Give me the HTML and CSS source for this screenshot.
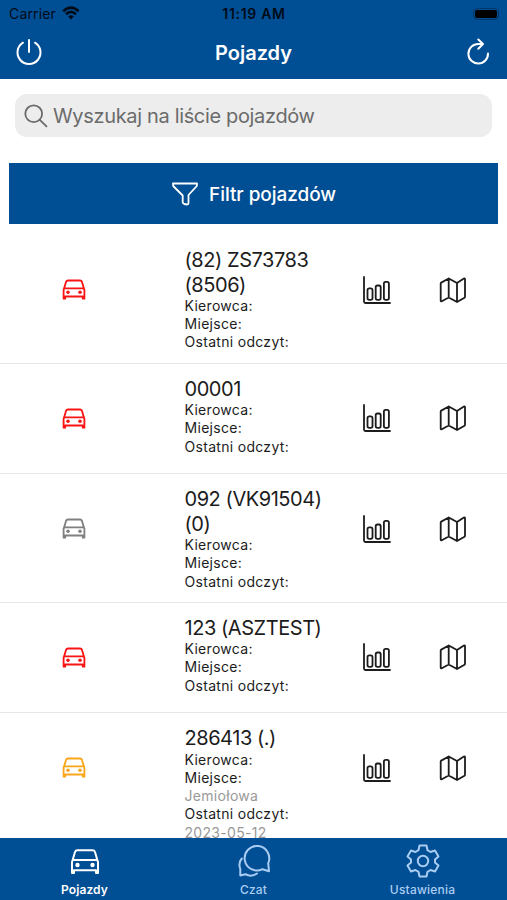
FILE: index.html
```html
<!DOCTYPE html>
<html lang="pl">
<head>
    <meta charset="UTF-8" />
    <meta name="viewport" content="width=device-width, initial-scale=1" />
    <title>Pojazdy</title>
    <link rel="stylesheet" href="styles.css">
</head>
<body>
    <svg class="sprite" aria-hidden="true">
        <symbol id="car" viewBox="0 0 30 26">
            <path d="M2 24.500 V13.500 L2.800 11 L5 3.500 Q5.600 1.800 7.500 1.800 H22.500 Q24.400 1.800 25 3.500 L27.200 11 L28 13.500 V24.500 H26 V21.800 H4 V24.500 Z M2.800 11.500 H27.200" />
            <circle class="fill" cx="7.500" cy="16.500" r="2.200" />
            <circle class="fill" cx="22.500" cy="16.500" r="2.200" />
        </symbol>
        <symbol id="chart" viewBox="0 0 28 28">
            <path d="M1 1 V25.500 Q1 27 2.500 27 H27" />
            <rect x="4.500" y="12.300" width="5" height="11.500" rx="1.800" />
            <rect x="12.700" y="9.500" width="5" height="14.300" rx="1.800" />
            <rect x="20.900" y="5.800" width="5" height="18" rx="1.800" />
        </symbol>
        <symbol id="map" viewBox="0 0 28 28">
            <path d="M9.700 2.500 L2.200 6.600 Q1.700 6.900 1.700 7.500 V24.500 Q1.700 25.700 2.800 25.200 L9.700 21.500 L18 26 L25.500 21.700 Q26 21.400 26 20.800 V3.300 Q26 2.100 24.900 2.600 L18 7 Z M9.700 2.500 V21.500 M18 7 V26" />
        </symbol>
    </svg>

    <header class="header">
        <div class="status-bar">
            <div class="carrier">
                <span>Carrier</span>
                <svg class="wifi" viewBox="0 0 18 14">
                    <path d="M1.300 5.200 Q9 -2 16.700 5.200 M4 8.200 Q9 3.500 14 8.200" />
                    <path class="fill" d="M9 13.500 L6.200 10.500 Q9 8 11.800 10.500 Z" />
                </svg>
            </div>
            <div class="clock">11:19 AM</div>
            <div class="battery"><span class="battery-level"></span></div>
        </div>
        <div class="nav-bar">
            <svg class="nav-icon" viewBox="0 0 28 28">
                <path d="M14 2 V14 M8 4.700 A11.500 11.500 0 1 0 20 4.700" />
            </svg>
            <h1 class="title">Pojazdy</h1>
            <svg class="nav-icon" viewBox="0 0 28 28">
                <path d="M24 15.500 A9.800 9.800 0 1 1 14.200 6 H18.700 M14.300 1.500 L19 6 L14.300 10.700" />
            </svg>
        </div>
    </header>

    <main class="content">
        <label class="search">
            <svg class="search-icon" viewBox="0 0 24 24">
                <circle cx="9.700" cy="9.700" r="8.400" />
                <path d="M15.800 15.800 L22.500 22.300" />
            </svg>
            <span>Wyszukaj na liście pojazdów</span>
        </label>

        <div class="filter-btn">
            <svg class="filter-icon" viewBox="0 0 28 24">
                <path d="M2 1.500 H26 L25.800 4 L17.500 13 V21 Q17.500 22.500 16 22.500 L13.200 22 Q11.700 21.500 11.700 20 V13.500 L2.200 4 Z" />
            </svg>
            <span>Filtr pojazdów</span>
        </div>

        <ul class="vehicles">
            <li class="vehicle">
                <div class="cell"><svg class="car red"><use href="#car" /></svg></div>
                <div class="info">
                    <h2>(82) ZS73783<br>(8506)</h2>
                    <p>Kierowca:</p>
                    <p>Miejsce:</p>
                    <p>Ostatni odczyt:</p>
                </div>
                <div class="cell"><svg class="action"><use href="#chart" /></svg></div>
                <div class="cell"><svg class="action"><use href="#map" /></svg></div>
            </li>
            <li class="vehicle">
                <div class="cell"><svg class="car red"><use href="#car" /></svg></div>
                <div class="info">
                    <h2>00001</h2>
                    <p>Kierowca:</p>
                    <p>Miejsce:</p>
                    <p>Ostatni odczyt:</p>
                </div>
                <div class="cell"><svg class="action"><use href="#chart" /></svg></div>
                <div class="cell"><svg class="action"><use href="#map" /></svg></div>
            </li>
            <li class="vehicle">
                <div class="cell"><svg class="car gray"><use href="#car" /></svg></div>
                <div class="info">
                    <h2>092 (VK91504)<br>(0)</h2>
                    <p>Kierowca:</p>
                    <p>Miejsce:</p>
                    <p>Ostatni odczyt:</p>
                </div>
                <div class="cell"><svg class="action"><use href="#chart" /></svg></div>
                <div class="cell"><svg class="action"><use href="#map" /></svg></div>
            </li>
            <li class="vehicle">
                <div class="cell"><svg class="car red"><use href="#car" /></svg></div>
                <div class="info">
                    <h2>123 (ASZTEST)</h2>
                    <p>Kierowca:</p>
                    <p>Miejsce:</p>
                    <p>Ostatni odczyt:</p>
                </div>
                <div class="cell"><svg class="action"><use href="#chart" /></svg></div>
                <div class="cell"><svg class="action"><use href="#map" /></svg></div>
            </li>
            <li class="vehicle">
                <div class="cell"><svg class="car orange"><use href="#car" /></svg></div>
                <div class="info">
                    <h2>286413 (.)</h2>
                    <p>Kierowca:</p>
                    <p>Miejsce:</p>
                    <p class="value">Jemiołowa</p>
                    <p>Ostatni odczyt:</p>
                    <p class="value">2023-05-12</p>
                </div>
                <div class="cell"><svg class="action"><use href="#chart" /></svg></div>
                <div class="cell"><svg class="action"><use href="#map" /></svg></div>
            </li>
        </ul>
    </main>

    <nav class="tab-bar">
        <div class="tab active">
            <svg class="tab-icon" viewBox="0 0 34 34"><use href="#car" x="2" y="4.500" width="30" height="26" /></svg>
            <span>Pojazdy</span>
        </div>
        <div class="tab">
            <svg class="tab-icon" viewBox="0 0 34 34">
                <path d="M32 27.300 L31.200 19.200 A12.300 12.300 0 1 0 25.500 25.200 Z" />
                <path d="M4.800 14.500 Q1 19 3.300 25 L3.300 31.500 L8.500 30.200 Q14 33.500 20 29.500" />
            </svg>
            <span>Czat</span>
        </div>
        <div class="tab">
            <svg class="tab-icon" viewBox="0 0 34 34">
                <path d="M13.500 1.500 H20.500 L21.500 6.200 L24.500 8 L29 6.500 L32.500 12.500 L29 15.500 V18.500 L32.500 21.500 L29 27.500 L24.500 26 L21.500 27.800 L20.500 32.500 H13.500 L12.500 27.800 L9.500 26 L5 27.500 L1.500 21.500 L5 18.500 V15.500 L1.500 12.500 L5 6.500 L9.500 8 L12.500 6.200 Z" />
                <circle cx="17" cy="17" r="5.200" />
            </svg>
            <span>Ustawienia</span>
        </div>
    </nav>
</body>
</html>
```

FILE: styles.css
```css
:root {
    --blue: #004e94;
    --tab-inactive: #a9cdf2;
    --text: #1c1c1c;
    --line: #e6e6e6;
}

* {
    margin: 0;
    padding: 0;
    box-sizing: border-box;
}

body {
    display: flex;
    flex-direction: column;
    height: 100vh;
    overflow: hidden;
    background: #fff;
    color: var(--text);
    font-family: Inter, "Liberation Sans", sans-serif;
}

svg {
    display: block;
    flex: none;
    fill: none;
    stroke: currentColor;
    stroke-width: 2;
    stroke-linecap: round;
    stroke-linejoin: round;
}

.fill {
    fill: currentColor;
    stroke: none;
}

.sprite {
    position: absolute;
    width: 0;
    height: 0;
}

.header {
    flex: none;
    height: 79px;
    background: var(--blue);
}

.status-bar {
    display: grid;
    grid-template-columns: 1fr auto 1fr;
    align-items: center;
    height: 27px;
    padding: 0 8px 0 9px;
    color: #000b18;
    font-size: 14px;
}

.carrier {
    display: flex;
    align-items: center;
    gap: 6px;
    letter-spacing: 0.15px;
}

.wifi {
    width: 18px;
    height: 14px;
    margin-top: -2px;
    stroke-width: 2.6;
    stroke-linecap: butt;
}

.clock {
    font-weight: 600;
    letter-spacing: 0.7px;
}

.battery {
    justify-self: end;
    width: 26px;
    height: 12px;
    padding: 1px;
    border: 1px solid #00386c;
    border-radius: 4px;
}

.battery-level {
    display: block;
    height: 100%;
    border-radius: 2px;
    background: #000;
}

.nav-bar {
    display: flex;
    align-items: center;
    justify-content: space-between;
    height: 50px;
    padding: 0 15px;
    color: #fff;
}

.nav-icon {
    width: 28px;
    height: 28px;
}

.title {
    padding-top: 1px;
    font-size: 20px;
    font-weight: 600;
}

.content {
    flex: 1;
    min-height: 0;
    overflow: hidden;
}

.search {
    display: flex;
    align-items: center;
    gap: 5px;
    height: 43px;
    margin: 15px 15px 0;
    padding: 0 9px;
    border-radius: 12px;
    background: #ededed;
    color: #6b6b6b;
    font-size: 20px;
    letter-spacing: -0.34px;
}

.search-icon {
    width: 24px;
    height: 24px;
    stroke-width: 1.8;
}

.filter-btn {
    display: flex;
    align-items: center;
    justify-content: center;
    gap: 10px;
    height: 61px;
    margin: 26px 9px 0;
    padding-top: 1px;
    background: var(--blue);
    color: #fff;
    font-size: 19px;
    font-weight: 500;
    letter-spacing: -0.05px;
}

.filter-icon {
    width: 28px;
    height: 24px;
    stroke-width: 1.8;
}

.vehicles {
    margin-top: 11px;
    list-style: none;
}

.vehicle {
    display: grid;
    grid-template-columns: 148px 1fr 76px 76px 16px;
    align-items: start;
    border-bottom: 1px solid var(--line);
}

.cell {
    display: flex;
    align-items: center;
    justify-content: center;
    height: 109.500px;
}

.info {
    padding: 13px 0 11px 36.500px;
}

.info h2 {
    font-size: 20px;
    font-weight: 400;
    line-height: 24.500px;
    letter-spacing: -0.45px;
    white-space: nowrap;
}

.info p {
    font-size: 14px;
    line-height: 18.200px;
    letter-spacing: 0.3px;
}

.info .value {
    color: #999;
}

.car {
    width: 24px;
    height: 21px;
    stroke-width: 2.3;
}

.red {
    color: #fa1414;
}

.gray {
    color: #808080;
}

.orange {
    color: #f9a61a;
}

.action {
    width: 28px;
    height: 28px;
    stroke-width: 1.8;
}

.tab-bar {
    display: grid;
    grid-template-columns: repeat(3, 1fr);
    flex: none;
    height: 62px;
    background: var(--blue);
    color: var(--tab-inactive);
    font-size: 12px;
    font-weight: 500;
    letter-spacing: 0.2px;
}

.tab {
    display: flex;
    flex-direction: column;
    align-items: center;
    gap: 4px;
    padding-top: 6px;
}

.tab.active {
    color: #fff;
    font-weight: 600;
    letter-spacing: 0.1px;
}

.tab-icon {
    width: 34px;
    height: 34px;
}
```
